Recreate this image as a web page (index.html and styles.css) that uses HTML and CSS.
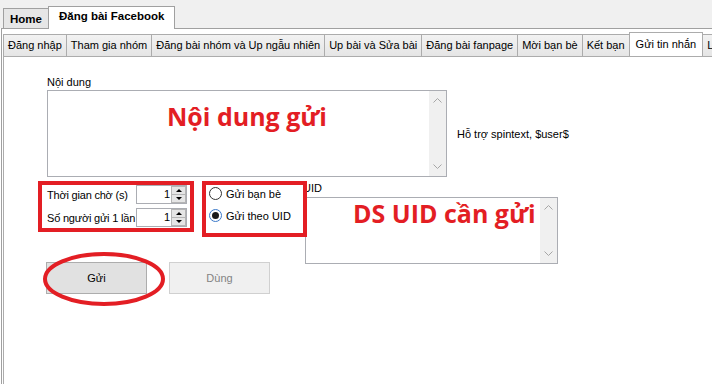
FILE: index.html
```html
<html><head>
    <title>Đăng bài Facebook</title>
    <link rel="stylesheet" href="styles.css">
</head>
<body>
    <div class="main-tabs">
        <div class="main-tab">Home</div>
        <div class="main-tab active">Đăng bài Facebook</div>
    </div>
    <div class="main-page">
        <div class="sub-tabs">
            <div class="sub-tab">Đăng nhập</div>
            <div class="sub-tab">Tham gia nhóm</div>
            <div class="sub-tab">Đăng bài nhóm và Up ngẫu nhiên</div>
            <div class="sub-tab">Up bài và Sửa bài</div>
            <div class="sub-tab">Đăng bài fanpage</div>
            <div class="sub-tab">Mời bạn bè</div>
            <div class="sub-tab">Kết bạn</div>
            <div class="sub-tab active">Gửi tin nhắn</div>
            <div class="sub-tab">L</div>
        </div>
        <div class="sub-page">
            <div class="field-label">Nội dung</div>
            <div class="content-row">
                <div class="textbox content-box">
                    <div class="textbox-body content-body"><span class="note">Nội dung gửi</span></div>
                    <div class="vscroll">
                        <svg width="9" height="5" viewBox="0 0 9 5"><polyline points="0.5,4.5 4.5,0.5 8.5,4.5" fill="none" stroke="#a6a6a6"/></svg>
                        <svg width="9" height="5" viewBox="0 0 9 5"><polyline points="0.5,0.5 4.5,4.5 8.5,0.5" fill="none" stroke="#a6a6a6"/></svg>
                    </div>
                </div>
                <div class="hint">Hỗ trợ spintext, $user$</div>
            </div>
            <div class="send-row">
                <div class="left-col">
                    <div class="option-row">
                        <div class="mark spin-group">
                            <div class="spin-row">
                                <span class="spin-label">Thời gian chờ (s)</span>
                                <div class="spin">
                                    <span class="spin-value">1</span>
                                    <div class="spin-btns">
                                        <span class="spin-up"></span>
                                        <span class="spin-down"></span>
                                    </div>
                                </div>
                            </div>
                            <div class="spin-row">
                                <span class="spin-label">Số người gửi 1 lần</span>
                                <div class="spin">
                                    <span class="spin-value">1</span>
                                    <div class="spin-btns">
                                        <span class="spin-up"></span>
                                        <span class="spin-down"></span>
                                    </div>
                                </div>
                            </div>
                        </div>
                        <div class="mark radio-group">
                            <div class="radio-row"><span class="radio"></span>Gửi bạn bè</div>
                            <div class="radio-row"><span class="radio checked"></span>Gửi theo UID</div>
                        </div>
                    </div>
                    <div class="button-row">
                        <div class="btn-wrap">
                            <button class="btn">Gửi</button>
                            <svg class="circle-mark" width="126" height="58" viewBox="0 0 126 58"><ellipse cx="63" cy="29" rx="59" ry="25" fill="none" stroke="#e31e24" stroke-width="4"/></svg>
                        </div>
                        <button class="btn" disabled>Dùng</button>
                    </div>
                </div>
                <div class="uid-col">
                    <div class="field-label">UID</div>
                    <div class="textbox uid-box">
                        <div class="textbox-body uid-body"><span class="note">DS UID cần gửi</span></div>
                        <div class="vscroll">
                            <svg width="9" height="5" viewBox="0 0 9 5"><polyline points="0.5,4.5 4.5,0.5 8.5,4.5" fill="none" stroke="#a6a6a6"/></svg>
                            <svg width="9" height="5" viewBox="0 0 9 5"><polyline points="0.5,0.5 4.5,4.5 8.5,0.5" fill="none" stroke="#a6a6a6"/></svg>
                        </div>
                    </div>
                </div>
            </div>
        </div>
    </div>
</body></html>
```

FILE: styles.css
```css
body {
    margin: 0;
    font-family: "Liberation Sans", Arial, sans-serif;
    font-size: 11px;
    color: #000;
    background: #fff;
    overflow: hidden;
    width: 712px;
    height: 384px;
}

.main-tabs {
    height: 28px;
    background: #f0f0f0;
    display: flex;
    align-items: flex-end;
    padding-left: 3px;
}

.main-tab {
    height: 19px;
    line-height: 20px;
    padding: 0 6px;
    border: 1px solid #a0a0a0;
    border-bottom: none;
    background: #e6e6e6;
    font-weight: bold;
    font-size: 11.5px;
    white-space: nowrap;
}

.main-tab.active {
    height: 22px;
    line-height: 18px;
    padding: 0 10px;
    margin-left: -1px;
    margin-bottom: -1px;
    background: #fff;
    position: relative;
    z-index: 1;
}

.main-page {
    margin-left: 1px;
    padding: 1px 0 0 1px;
    border-top: 1px solid #a0a0a0;
    border-left: 1px solid #a0a0a0;
}

.sub-tabs {
    height: 26px;
    display: flex;
    align-items: flex-end;
    overflow: hidden;
}

.sub-tab {
    height: 21px;
    line-height: 21px;
    padding: 0 4px;
    margin-right: -1px;
    border: 1px solid #acacac;
    border-bottom: none;
    background: linear-gradient(#f2f2f2, #e5e5e5);
    white-space: nowrap;
}

.sub-tab.active {
    height: 24px;
    line-height: 22px;
    padding: 0 6px;
    margin-bottom: -1px;
    background: #fff;
    position: relative;
    z-index: 1;
}

.sub-page {
    height: 328px;
    box-sizing: border-box;
    padding: 18px 0 0 43px;
    border-top: 1px solid #acacac;
    border-left: 1px solid #acacac;
}

.field-label {
    line-height: 14px;
    height: 14px;
    white-space: nowrap;
}

.content-row {
    display: flex;
    align-items: center;
    margin-top: 1px;
}

.textbox {
    display: flex;
    box-sizing: border-box;
    border: 1px solid #abadb3;
    background: #fff;
}

.textbox-body {
    flex: 1;
}

.note {
    font-family: "Open Sans", sans-serif;
    font-weight: bold;
    font-size: 25px;
    line-height: 30px;
    color: #e31e24;
    white-space: nowrap;
}

.content-box {
    width: 400px;
    height: 87px;
}

.content-body {
    padding: 10px 0 0 119px;
}

.vscroll {
    width: 17px;
    background: #f0f0f0;
    display: flex;
    flex-direction: column;
    justify-content: space-between;
    align-items: center;
    padding: 7px 0;
}

.hint {
    margin-left: 10px;
}

.send-row {
    display: flex;
    align-items: flex-start;
    margin: 4px 0 0 -9px;
}

.option-row {
    display: flex;
    align-items: flex-start;
    gap: 8px;
}

.mark {
    border: 4px solid #e31e24;
    box-sizing: border-box;
}

.spin-group {
    width: 156px;
    height: 51px;
    padding: 0 3px 0 5px;
    display: flex;
    flex-direction: column;
    gap: 4px;
}

.spin-row {
    display: flex;
    align-items: center;
    justify-content: space-between;
    height: 19px;
    white-space: nowrap;
}

.spin-label {
    letter-spacing: -0.2px;
}

.spin {
    width: 51px;
    height: 19px;
    flex-shrink: 0;
    box-sizing: border-box;
    border: 1px solid #abadb3;
    background: #fff;
    display: flex;
}

.spin-value {
    flex: 1;
    text-align: right;
    padding-right: 1px;
    line-height: 17px;
}

.spin-btns {
    width: 15px;
    display: flex;
    flex-direction: column;
}

.spin-btns span {
    flex: 1;
    background: #e5e5e5;
    border: 1px solid #b5b5b5;
    display: flex;
    align-items: center;
    justify-content: center;
}

.spin-btns span + span {
    border-top: none;
}

.spin-up::after {
    content: "";
    border-left: 3px solid transparent;
    border-right: 3px solid transparent;
    border-bottom: 3px solid #000;
}

.spin-down::after {
    content: "";
    border-left: 3px solid transparent;
    border-right: 3px solid transparent;
    border-top: 3px solid #000;
}

.radio-group {
    width: 105px;
    height: 56px;
    padding: 0 0 0 3px;
    display: flex;
    flex-direction: column;
    gap: 5px;
    position: relative;
    z-index: 1;
}

.radio-row {
    height: 17px;
    display: flex;
    align-items: center;
    white-space: nowrap;
}

.radio {
    width: 13px;
    height: 13px;
    box-sizing: border-box;
    border: 1px solid #333;
    border-radius: 50%;
    background: #fff;
    margin-right: 4px;
    display: flex;
    align-items: center;
    justify-content: center;
}

.radio.checked {
    border-color: #3b79c9;
}

.radio.checked::after {
    content: "";
    width: 7px;
    height: 7px;
    border-radius: 50%;
    background: #1a1a1a;
}

.button-row {
    display: flex;
    gap: 22px;
    margin: 25px 0 0 8px;
}

.btn-wrap {
    position: relative;
}

.btn {
    width: 101px;
    height: 32px;
    font-family: "Liberation Sans", Arial, sans-serif;
    font-size: 11px;
    color: #000;
    background: #e1e1e1;
    border: 1px solid #adadad;
    padding: 0;
}

.btn:disabled {
    background: #f0f0f0;
    border-color: #d0d0d0;
    color: #838383;
}

.circle-mark {
    position: absolute;
    left: -5px;
    top: -12px;
}

.uid-col {
    margin-left: -4px;
}

.uid-box {
    width: 253px;
    height: 67px;
    margin: 2px 0 0 2px;
}

.uid-body {
    padding: 0 0 0 47px;
}
```
